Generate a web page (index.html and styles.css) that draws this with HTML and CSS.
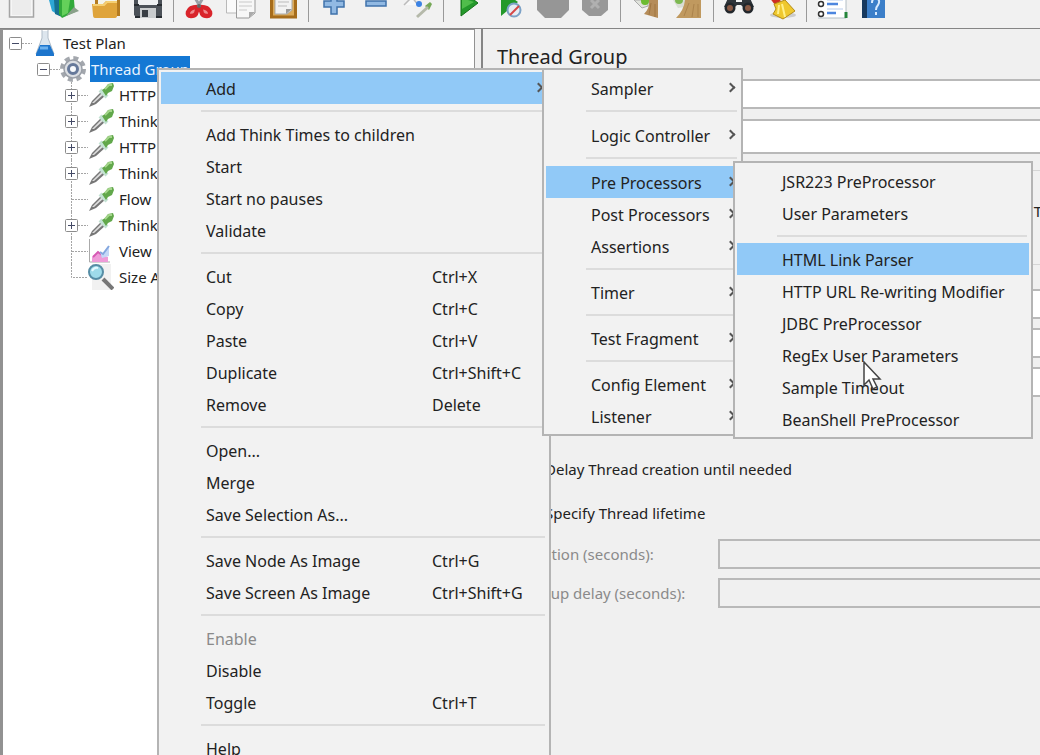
FILE: index.html
```html
<!DOCTYPE html>
<html lang="en">
<head>
<meta charset="utf-8">
<title>Test Plan</title>
<link rel="stylesheet" href="styles.css">
</head>
<body>
<svg class="defs" aria-hidden="true">
  <symbol id="minus-box" viewBox="0 0 29 26"><path d="M19 13.500H29" class="dots"/><rect x="6.500" y="7.500" width="12" height="12" rx="1" class="box"/><path d="M9 13.500H16" class="mark"/></symbol>
  <symbol id="plus-box" viewBox="0 0 29 26"><path d="M12.500 0V26M19 13.500H29" class="dots"/><rect x="6.500" y="7.500" width="12" height="12" rx="1" class="box"/><path d="M9 13.500H16M12.500 10V17" class="mark"/></symbol>
  <symbol id="leaf" viewBox="0 0 29 26"><path d="M12.500 0V26M13 13.500H29" class="dots"/></symbol>
  <symbol id="leaf-last" viewBox="0 0 29 26"><path d="M12.500 0V13.500H29" class="dots"/></symbol>
  <symbol id="dropper" viewBox="0 0 26 26">
    <path d="M1 25L4 19L14 9L18 13L8 22Z" fill="#777"/><path d="M4 21L14 11L15.500 12.500L6 21Z" fill="#ddd"/>
    <path d="M12 8L19 15" stroke="#c3e2d3" stroke-width="4"/>
    <path d="M14 8L17 6L20 2L25 1L26 4L24 9L20 11L18 14Z" fill="#62a84b"/><path d="M17 7L21 3L24 3" stroke="#a4d58b" stroke-width="2" fill="none"/>
  </symbol>
</svg>

<header class="toolbar" role="toolbar" aria-label="Main">
  <button aria-label="New"><svg viewBox="0 0 32 28"><rect x="3.500" y="-8" width="24" height="25" fill="#f6f6f6" stroke="#a5a5a5" stroke-width="1.500"/><rect x="6" y="-5" width="19" height="20" fill="#ececec"/></svg></button>
  <button aria-label="Templates"><svg viewBox="0 0 32 28"><path d="M1 0H12V16L4 11Z" fill="#2da7d6"/><path d="M6 0H14V17L7 14Z" fill="#176f91"/><path d="M11 0H26L27 12L14 18L11 14Z" fill="#31a93a"/><path d="M14 0H22L20 13L14 16Z" fill="#64d05a"/><path d="M26 7L31 11L18 16Z" fill="#8aa08a"/></svg></button>
  <button aria-label="Open"><svg viewBox="0 0 32 28"><path d="M5 0H30V16H5Z" fill="#b47b21"/><path d="M8 -3H27V6H8Z" fill="#f3f3ea"/><path d="M2 4H13L16 1H27V16Q27 18 24 18H5Q3 18 3 15Z" fill="#dfa43b"/><path d="M3 5H14L17 2H27" stroke="#f5cf73" stroke-width="2" fill="none"/></svg></button>
  <button aria-label="Save"><svg viewBox="0 0 32 28"><path d="M2 -9H30V18H5L2 15Z" fill="#4b5158"/><rect x="6" y="-6" width="20" height="11" fill="#eef0f2"/><path d="M2 5H7M25 5H30M3 17H30" stroke="#272c31" stroke-width="2"/><rect x="8" y="8" width="16" height="10" fill="#c9ccce"/><rect x="10" y="10" width="6" height="7" fill="#3a3f45"/></svg></button>
  <hr>
  <button aria-label="Cut"><svg viewBox="0 0 32 28"><path d="M11 -4L18 8M21 -4L14 8" stroke="#9aa0a6" stroke-width="3"/><path d="M14 7Q15 16 8 16Q4 16 5 12Q7 7 14 7M18 7Q17 16 24 16Q28 16 27 12Q25 7 18 7" fill="#ef8a8e" stroke="#d9242b" stroke-width="4.500"/><circle cx="16" cy="6" r="2" fill="#666"/></svg></button>
  <button aria-label="Copy"><svg viewBox="0 0 32 28"><path d="M1.500 -6H18V13H1.500Z" fill="#fafafa" stroke="#b9b9b9"/><path d="M11.500 -3H30V13L24 18H11.500Z" fill="#f7f7f7" stroke="#999"/><path d="M14 2H27M14 6H27M14 10H22" stroke="#c9c9c9"/><path d="M30 12H24V18Z" fill="#aaa"/></svg></button>
  <button aria-label="Paste"><svg viewBox="0 0 32 28"><rect x="4.500" y="-8" width="24" height="25" fill="#dcaa58" stroke="#a66c1b" stroke-width="3"/><path d="M8 -3H25V10L20 14H8Z" fill="#f2f2f2" stroke="#a9a9a9"/><path d="M11 2H22M11 6H20" stroke="#bbb"/><path d="M25 9H19V14Z" fill="#999"/></svg></button>
  <hr>
  <button aria-label="Expand all"><svg viewBox="0 0 32 28"><path d="M13 -8H19V1H26V7H19V14H13V7H6V1H13Z" fill="#91b9e3" stroke="#3f72ab" stroke-width="1.500"/></svg></button>
  <button aria-label="Collapse all"><svg viewBox="0 0 32 28"><rect x="6" y="1" width="20" height="5" fill="#91b9e3" stroke="#3f72ab" stroke-width="1.500"/></svg></button>
  <button aria-label="Toggle"><svg viewBox="0 0 32 28"><path d="M2 5L10 -3L16 5" fill="#f8f8f8" stroke="#bbb" stroke-width="1.500"/><circle cx="17" cy="4" r="3" fill="#3c83e4"/><path d="M23 6L28 2L30 4L27 10Z" fill="#76a857"/><path d="M15 17L26 7" stroke="#b5b9aa" stroke-width="3"/></svg></button>
  <hr>
  <button aria-label="Start"><svg viewBox="0 0 32 28"><path d="M8 -10L25 3L8 16Z" fill="#24992b" stroke="#157218"/><path d="M9 -2L21 2L9 9Z" fill="#50bd4b"/></svg></button>
  <button aria-label="Start no pauses"><svg viewBox="0 0 32 28"><path d="M6 -10L23 2L6 16Z" fill="#24992b"/><circle cx="19" cy="10" r="6.500" fill="#e7edf5" stroke="#7ca2c7" stroke-width="2"/><path d="M15 15L24 6" stroke="#d64747" stroke-width="2"/></svg></button>
  <button aria-label="Stop" disabled><svg viewBox="0 0 32 28"><path d="M8 -14H24L32 -6V10L24 18H8L0 10V-6Z" fill="#969696"/></svg></button>
  <button aria-label="Shutdown" disabled><svg viewBox="0 0 32 28"><path d="M10 -10H22L29 -3V10L22 16H10L3 10V-3Z" fill="#989898"/><path d="M12 0L20 8M20 0L12 8" stroke="#b0b0b0" stroke-width="3"/></svg></button>
  <hr>
  <button aria-label="Clear"><svg viewBox="0 0 32 28"><path d="M4 0L12 8L18 6V0Z" fill="#e0e3dc" stroke="#aaa"/><circle cx="15" cy="1" r="4" fill="#6dbb31"/><path d="M19 0H28V18L14 14Q20 8 19 0Z" fill="#b58c59"/><path d="M21 3L19 15M25 4V17" stroke="#a17743"/></svg></button>
  <button aria-label="Clear all"><svg viewBox="0 0 32 28"><path d="M1 0L6 8L13 7V0Z" fill="#d9ddd5"/><circle cx="7" cy="0" r="4" fill="#7cb850"/><path d="M13 0H29V18H4Q12 10 13 0Z" fill="#c0995f"/><path d="M17 3L12 16M22 4L20 17M26 4V17" stroke="#ab834c"/></svg></button>
  <hr>
  <button aria-label="Search"><svg viewBox="0 0 32 28"><path d="M6 -4H13V2H19V-4H26L31 7H20L18 5H14L12 7H1Z" fill="#30353a"/><circle cx="7" cy="8" r="5.500" fill="#22272c"/><circle cx="25" cy="8" r="5.500" fill="#22272c"/><circle cx="7" cy="8" r="3" fill="#8a5a45"/><circle cx="25" cy="8" r="3" fill="#8a5a45"/></svg></button>
  <button aria-label="Reset search"><svg viewBox="0 0 32 28"><ellipse cx="18" cy="15" rx="13" ry="3" fill="#ccc"/><path d="M4 -3L9 -5L16 1L10 5Z" fill="#cf2d22"/><path d="M9 4L20 0L30 11L18 19L8 14L11 9Z" fill="#efc82e" stroke="#b58c16"/><path d="M14 5L13 14M17 4L20 17" stroke="#fff08a" stroke-width="2"/></svg></button>
  <hr>
  <button aria-label="Function helper"><svg viewBox="0 0 32 28"><rect x="2" y="-5" width="28" height="23" fill="#fff"/><path d="M30 -2V18H2" stroke="#b4bfc6" fill="none"/><path d="M11 4H22M11 13H20" stroke="#4d86df" stroke-width="2.500"/><path d="M11 0H27M11 9H27" stroke="#b6cbed"/><circle cx="5" cy="4" r="2.500" fill="#fff" stroke="#333" stroke-width="1.500"/><circle cx="5" cy="14" r="2.500" fill="#fff" stroke="#333" stroke-width="1.500"/><path d="M30 12V18" stroke="#25853b" stroke-width="3" fill="none"/></svg></button>
  <button aria-label="Help"><svg viewBox="0 0 32 28"><rect x="4" y="-6" width="23" height="24" fill="#3c7fc9"/><rect x="4" y="-6" width="5" height="24" fill="#17395e"/><path d="M14 3Q14 -2 18 -2Q23 0 20 5Q18 7 18 10M18 12V15" stroke="#d8ebff" stroke-width="2" fill="none"/></svg></button>
</header>

<main class="split">
  <nav class="tree" aria-label="Test plan tree">
    <ul>
      <li class="node"><svg class="branch"><use href="#minus-box"/></svg><svg class="icon" viewBox="0 0 26 26"><path d="M10 1H16V8L22 24Q22 26 20 26H6Q4 26 4 24L10 8Z" fill="#dde6ee"/><path d="M10 0V8L4 24M16 0V8L22 24" stroke="#b1bdc9" fill="none"/><path d="M8 15H18L22 24V26H4V24Z" fill="#1d75cc"/><path d="M8 18H16" stroke="#6bb1ee" stroke-width="3"/></svg><span class="label">Test Plan</span></li>
      <li class="node level-1"><svg class="branch"><use href="#minus-box"/></svg><svg class="icon" viewBox="0 0 26 26"><circle cx="13" cy="13" r="11" fill="none" stroke="#a3a7ad" stroke-width="4" stroke-dasharray="5 3.640"/><circle cx="13" cy="13" r="9" fill="#dcdfe3" stroke="#9a9fa7" stroke-width="1.500"/><circle cx="13" cy="13" r="4.500" fill="#f8fafc" stroke="#66799a" stroke-width="3"/></svg><span class="label selected">Thread Group</span></li>
      <li class="node level-2"><svg class="branch"><use href="#plus-box"/></svg><svg class="icon"><use href="#dropper"/></svg><span class="label">HTTP</span></li>
      <li class="node level-2"><svg class="branch"><use href="#plus-box"/></svg><svg class="icon"><use href="#dropper"/></svg><span class="label">Think</span></li>
      <li class="node level-2"><svg class="branch"><use href="#plus-box"/></svg><svg class="icon"><use href="#dropper"/></svg><span class="label">HTTP</span></li>
      <li class="node level-2"><svg class="branch"><use href="#plus-box"/></svg><svg class="icon"><use href="#dropper"/></svg><span class="label">Think</span></li>
      <li class="node level-2"><svg class="branch"><use href="#leaf"/></svg><svg class="icon"><use href="#dropper"/></svg><span class="label">Flow</span></li>
      <li class="node level-2"><svg class="branch"><use href="#plus-box"/></svg><svg class="icon"><use href="#dropper"/></svg><span class="label">Think</span></li>
      <li class="node level-2"><svg class="branch"><use href="#leaf"/></svg><svg class="icon" viewBox="0 0 26 26"><path d="M1.500 1V24H22" stroke="#aaa" fill="none"/><path d="M4 24V19L10 14L14 17L20 19V24Z" fill="#ee9bd8"/><path d="M5 19L10 14L14 17" stroke="#d658b3" stroke-width="2" fill="none"/><path d="M12 14L15 16L21 8V18L14 20Z" fill="#c4d8f7"/><path d="M12 14L15 16L21 8" stroke="#84a7df" stroke-width="2" fill="none"/></svg><span class="label">View</span></li>
      <li class="node level-2"><svg class="branch"><use href="#leaf-last"/></svg><svg class="icon" viewBox="0 0 26 26"><path d="M4 0H23V26H4Z" fill="#f1f1f1"/><path d="M15 15L25 25" stroke="#777" stroke-width="4"/><circle cx="8" cy="8" r="7" fill="#9edbea" stroke="#568da5" stroke-width="2"/><path d="M4 7Q6 3 10 4" stroke="#e5faff" stroke-width="2" fill="none"/></svg><span class="label">Size A</span></li>
    </ul>
  </nav>

  <section class="panel">
    <h1>Thread Group</h1>
    <form>
      <div class="field name"><label for="name">Name:</label><input id="name" type="text"></div>
      <div class="field comments"><label for="comments">Notes:</label><input id="comments" type="text"></div>
      <fieldset class="errors">
        <label><input type="radio" name="err">Continue</label>
        <label><input type="radio" name="err">Next Loop</label>
        <label><input type="radio" name="err">Stop Thread</label>
      </fieldset>
      <fieldset class="properties">
        <div class="field"><label for="threads">Users:</label><input id="threads" type="text"></div>
        <div class="field"><label for="ramp">Ramp:</label><input id="ramp" type="text"></div>
        <div class="field"><label for="loops">Loop:</label><input id="loops" type="text"></div>
        <label class="check first"><input type="checkbox">Delay Thread creation until needed</label>
        <label class="check"><input type="checkbox">Specify Thread lifetime</label>
        <div class="field timing"><label for="duration">Duration (seconds):</label><input id="duration" type="text" disabled></div>
        <div class="field timing"><label for="delay">Startup delay (seconds):</label><input id="delay" type="text" disabled></div>
      </fieldset>
    </form>
  </section>
</main>

<div class="menu context" role="menu">
  <button class="active" role="menuitem">Add<i class="arrow"></i></button>
  <hr>
  <button role="menuitem">Add Think Times to children</button>
  <button role="menuitem">Start</button>
  <button role="menuitem">Start no pauses</button>
  <button role="menuitem">Validate</button>
  <hr>
  <button role="menuitem">Cut<kbd>Ctrl+X</kbd></button>
  <button role="menuitem">Copy<kbd>Ctrl+C</kbd></button>
  <button role="menuitem">Paste<kbd>Ctrl+V</kbd></button>
  <button role="menuitem">Duplicate<kbd>Ctrl+Shift+C</kbd></button>
  <button role="menuitem">Remove<kbd>Delete</kbd></button>
  <hr>
  <button role="menuitem">Open...</button>
  <button role="menuitem">Merge</button>
  <button role="menuitem">Save Selection As...</button>
  <hr>
  <button role="menuitem">Save Node As Image<kbd>Ctrl+G</kbd></button>
  <button role="menuitem">Save Screen As Image<kbd>Ctrl+Shift+G</kbd></button>
  <hr>
  <button role="menuitem" disabled>Enable</button>
  <button role="menuitem">Disable</button>
  <button role="menuitem">Toggle<kbd>Ctrl+T</kbd></button>
  <hr>
  <button role="menuitem">Help</button>
</div>

<div class="menu add" role="menu">
  <button role="menuitem">Sampler<i class="arrow"></i></button>
  <hr class="wide">
  <button role="menuitem">Logic Controller<i class="arrow"></i></button>
  <hr class="wide">
  <button class="active" role="menuitem">Pre Processors<i class="arrow"></i></button>
  <button role="menuitem">Post Processors<i class="arrow"></i></button>
  <button role="menuitem">Assertions<i class="arrow"></i></button>
  <hr>
  <button role="menuitem">Timer<i class="arrow"></i></button>
  <hr>
  <button role="menuitem">Test Fragment<i class="arrow"></i></button>
  <hr>
  <button role="menuitem">Config Element<i class="arrow"></i></button>
  <button role="menuitem">Listener<i class="arrow"></i></button>
</div>

<div class="menu processors" role="menu">
  <button role="menuitem">JSR223 PreProcessor</button>
  <button role="menuitem">User Parameters</button>
  <hr>
  <button class="active" role="menuitem">HTML Link Parser</button>
  <button role="menuitem">HTTP URL Re-writing Modifier</button>
  <button role="menuitem">JDBC PreProcessor</button>
  <button role="menuitem">RegEx User Parameters</button>
  <button role="menuitem">Sample Timeout</button>
  <button role="menuitem">BeanShell PreProcessor</button>
</div>

<svg class="pointer" viewBox="0 0 20 30" aria-hidden="true"><path d="M1 1V24L6 19L10 28L14 26L10 18H17Z" fill="#fff" stroke="#444" stroke-width="1.500"/></svg>
</body>
</html>
```
FILE: styles.css
```css
* {
  box-sizing: border-box;
}

body {
  margin: 0;
  height: 100vh;
  overflow: hidden;
  position: relative;
  display: flex;
  flex-direction: column;
  background: #f0f0f0;
  color: #222;
  font-family: "Noto Sans", "Open Sans", sans-serif;
  font-size: 15px;
}

button,
input {
  font: inherit;
  color: inherit;
}

.defs {
  position: absolute;
  width: 0;
  height: 0;
}

/* Toolbar */
.toolbar {
  display: flex;
  flex: none;
  height: 28px;
  padding-left: 1px;
  background: #f1f1f1;
  overflow: hidden;
}

.toolbar button {
  flex: none;
  width: 42px;
  height: 28px;
  padding: 0 5px;
  border: 0;
  background: none;
}

.toolbar svg {
  display: block;
  width: 32px;
  height: 28px;
}

.toolbar hr {
  flex: none;
  width: 1px;
  height: 22px;
  margin: 0 4px;
  border: 0;
  background: #999;
}

/* Split pane */
.split {
  display: flex;
  flex: 1;
  min-height: 0;
  gap: 6px;
  border-top: 1px solid #858585;
}

.tree {
  flex: 0 0 475px;
  border: solid #929292;
  border-width: 1px 1px 0 3px;
  background: #fff;
}

.tree ul {
  margin: 0;
  padding: 0;
  list-style: none;
}

.node {
  display: flex;
  align-items: center;
  height: 26px;
}

.level-1 {
  padding-left: 28px;
}

.level-2 {
  padding-left: 56px;
}

.branch {
  flex: none;
  width: 29px;
  height: 26px;
}

.icon {
  flex: none;
  width: 26px;
  height: 26px;
  margin-right: 4px;
}

.label {
  padding: 0 1px;
  line-height: 26px;
  white-space: nowrap;
}

.selected {
  background: #1478d4;
  color: #e8f3ff;
}

.dots {
  fill: none;
  stroke: #a5a5a5;
  stroke-dasharray: 2 1;
}

.box {
  fill: #fff;
  stroke: #8c8c8c;
}

.mark {
  stroke: #444a66;
  stroke-width: 1;
}

/* Settings panel */
.panel {
  flex: 1;
  min-width: 0;
  padding: 12px 0 0 14px;
  border-left: 2px solid #858585;
}

.panel h1 {
  margin: 0;
  font-size: 20px;
  font-weight: 400;
  line-height: 32px;
}

.field {
  display: flex;
  align-items: center;
  gap: 20px;
  height: 30px;
}

.field label {
  width: 80px;
  flex: none;
  white-space: nowrap;
}

.field input {
  flex: 1;
  min-width: 0;
  height: 100%;
  border: 2px solid #b9b9b9;
  border-right: 0;
  background: #fff;
}

.name {
  margin-top: 6px;
}

.comments {
  height: 35px;
  margin-top: 10px;
}

fieldset {
  margin: 0;
  padding: 0;
  border: 0;
  border-top: 1px solid #d5d5d5;
}

.errors {
  display: grid;
  grid-template-columns: 240px 240px 1fr;
  align-items: center;
  height: 94px;
  margin-top: 16px;
  padding-bottom: 14px;
  white-space: nowrap;
}

.properties {
  padding-top: 24px;
}

.properties .field + .field {
  margin-top: 9px;
}

.check {
  display: flex;
  align-items: center;
  gap: 5px;
  height: 44px;
  padding-left: 30px;
}

.check input {
  margin: 0;
}

.first {
  margin-top: 50px;
}

.timing {
  padding-left: 20px;
  color: #8a8a8a;
}

.check + .timing {
  margin-top: 4px;
}

.timing label {
  width: 181px;
}

.timing input {
  background: #f0f0f0;
}

/* Menus */
.menu {
  position: absolute;
  padding: 2px;
  border: 2px solid #b4b4b4;
  background: #f2f2f2;
  font-size: 16px;
}

.context {
  top: 68px;
  left: 157px;
  width: 394px;
}

.add {
  top: 68px;
  left: 542px;
  width: 201px;
}

.processors {
  top: 161px;
  left: 733px;
  width: 300px;
}

.menu button {
  display: grid;
  grid-template-columns: 226px 1fr;
  align-items: center;
  position: relative;
  width: 100%;
  height: 32px;
  padding: 2px 0 0 45px;
  border: 0;
  background: none;
  text-align: left;
  white-space: nowrap;
}

.menu .active {
  background: #91c9f7;
}

.menu button:disabled {
  color: #8a8a8a;
}

.menu hr {
  height: 2px;
  margin: 6px 2px 6px 40px;
  border: 0;
  background: #dcdcdc;
}

.menu .wide {
  margin-bottom: 7px;
}

.menu kbd {
  font: inherit;
}

.arrow {
  position: absolute;
  top: 12px;
  right: 5px;
  width: 7px;
  height: 7px;
  border: solid #555;
  border-width: 2px 2px 0 0;
  transform: rotate(45deg);
}

.pointer {
  position: absolute;
  top: 361px;
  left: 863px;
  width: 20px;
  height: 30px;
}
```
